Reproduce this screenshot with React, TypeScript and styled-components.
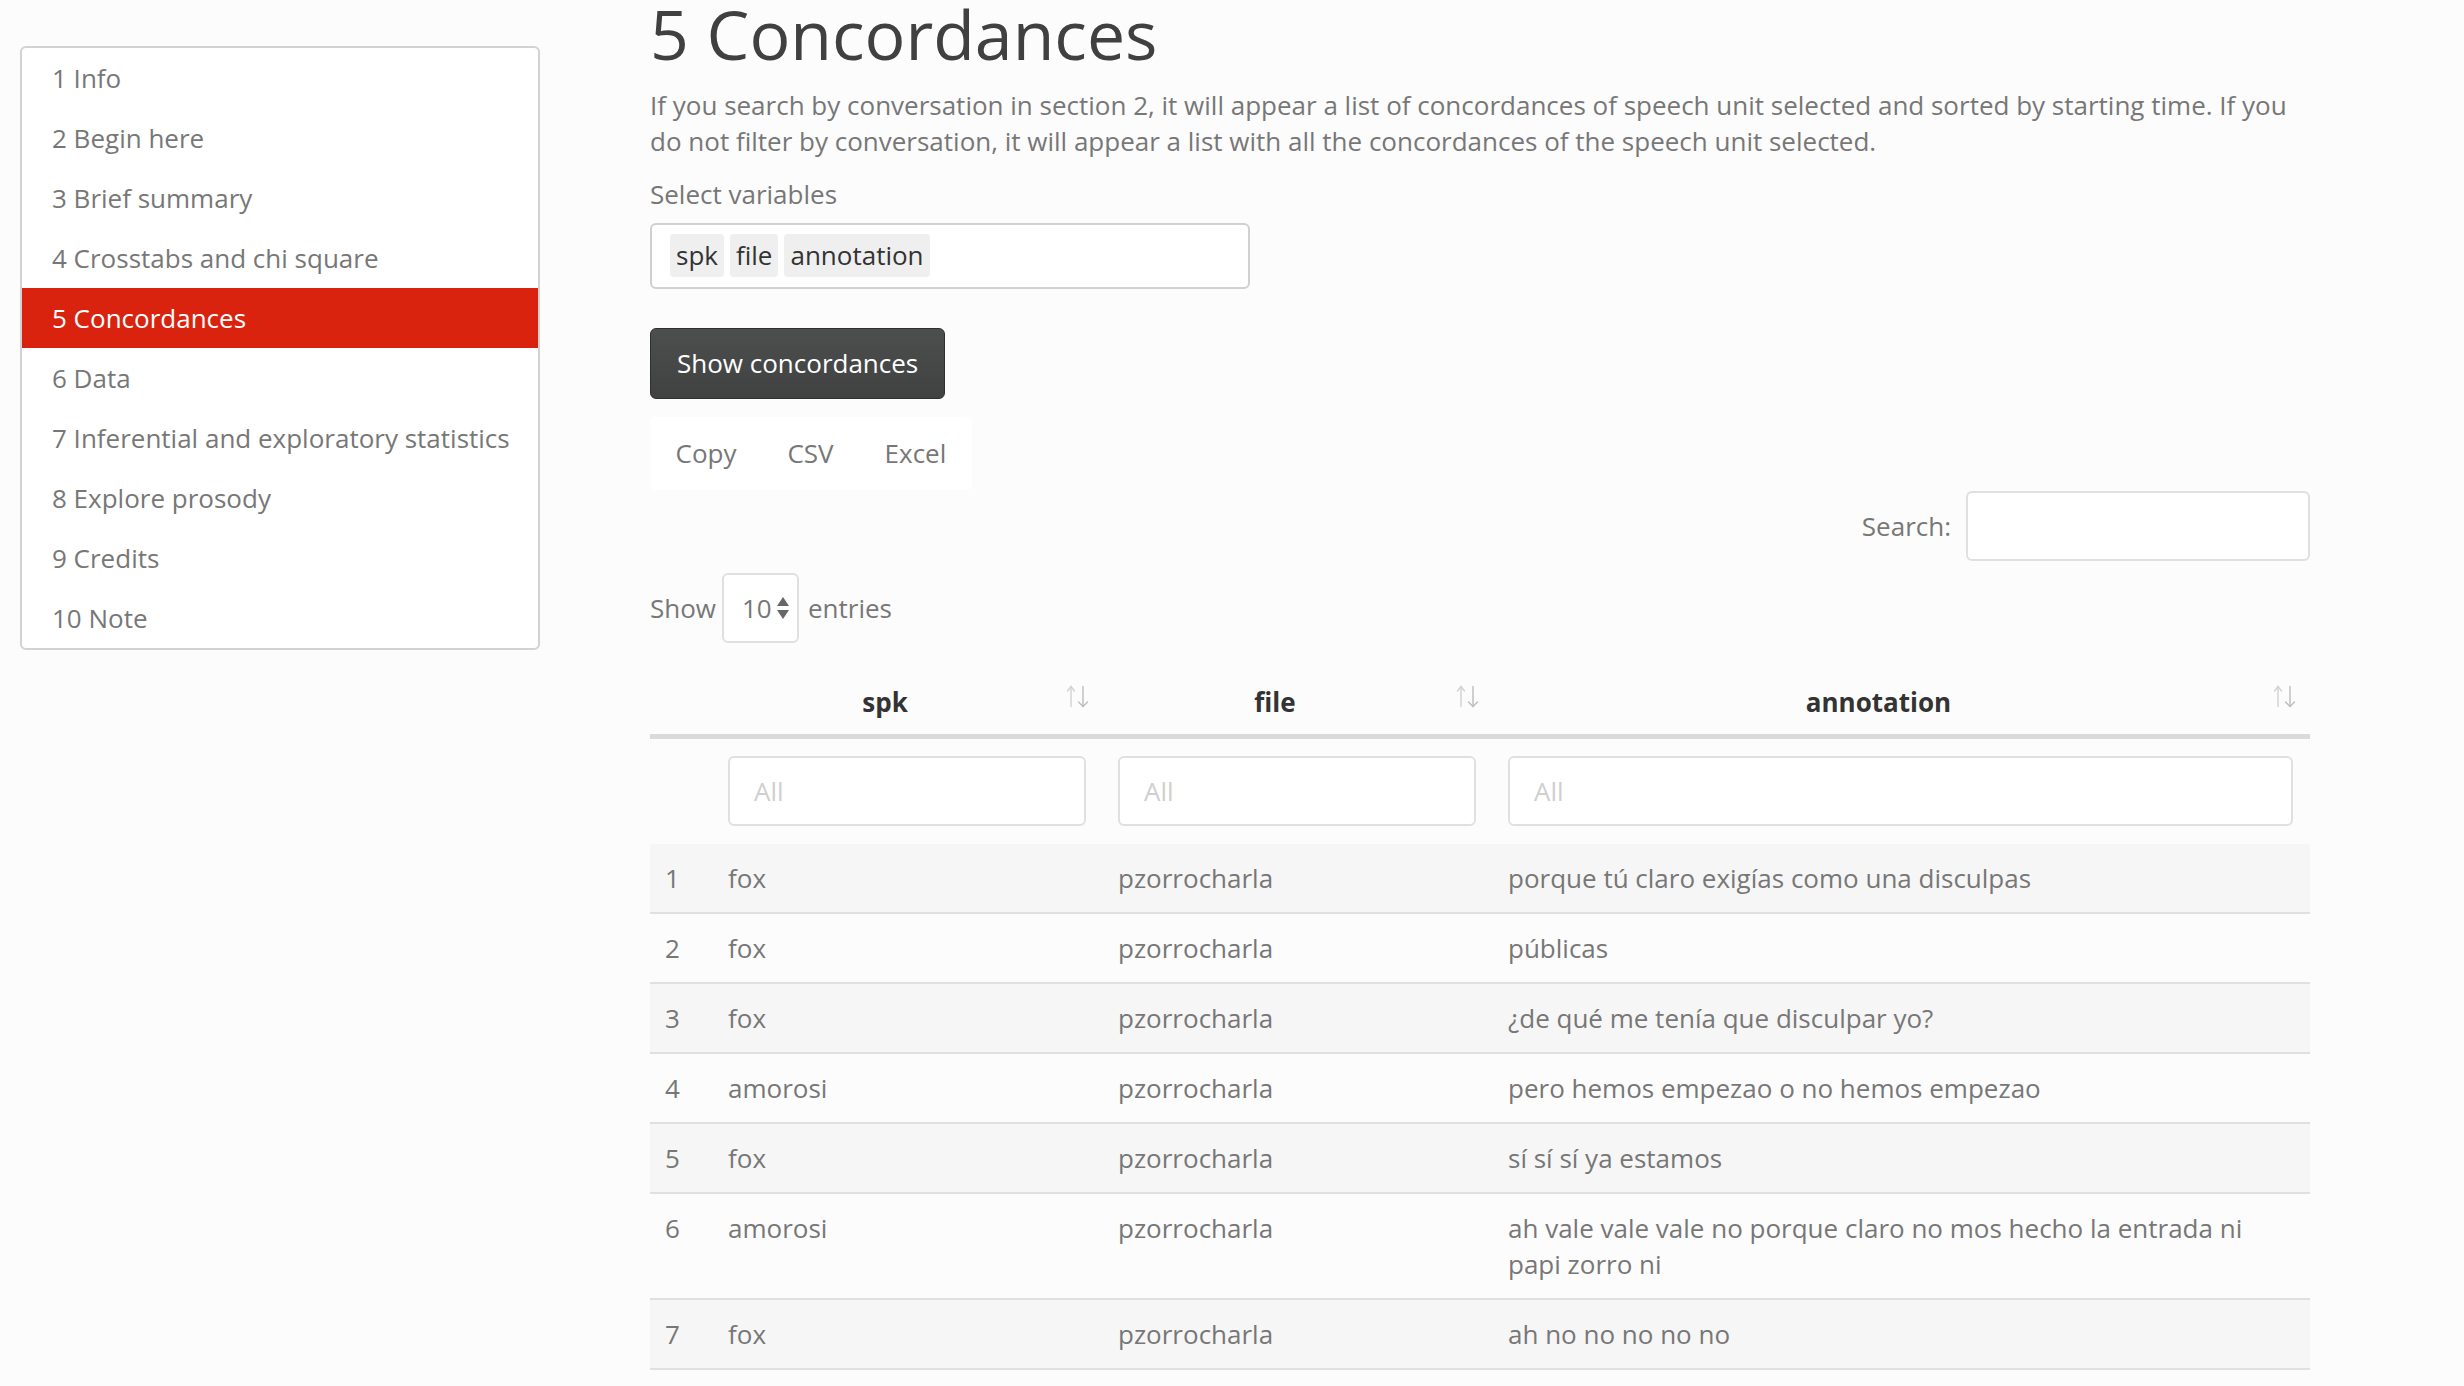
import React from "react";
import styled, { createGlobalStyle } from "styled-components";

const Global = createGlobalStyle`
  html, body { margin: 0; padding: 0; background: #fcfcfc; }
  body {
    font-family: "Open Sans", "Noto Sans", sans-serif;
    font-size: 26px;
    line-height: 36px;
    color: #777;
  }
  * { box-sizing: border-box; }
`;

const Page = styled.div`
  display: grid;
  grid-template-columns: 520px 1660px;
  column-gap: 110px;
  padding-left: 20px;
  align-items: start;
`;

const Sidebar = styled.nav`
  margin-top: 46px;
  border: 2px solid #d2d2d2;
  border-radius: 6px;
  background: #fff;
  overflow: hidden;
  display: flex;
  flex-direction: column;
`;

const NavItem = styled.a<{ $active?: boolean }>`
  display: flex;
  align-items: center;
  height: 60px;
  padding: 0 30px;
  color: ${(p) => (p.$active ? "#fff" : "#777")};
  background: ${(p) => (p.$active ? "#d9230f" : "transparent")};
  text-decoration: none;
  white-space: nowrap;
`;

const Main = styled.main`
  display: flex;
  flex-direction: column;
  align-items: stretch;
  margin-top: -7px;
`;

const Title = styled.h1`
  font-size: 68px;
  line-height: 1.2;
  font-weight: 400;
  color: #404040;
  margin: 0 0 12px;
`;

const Para = styled.p`
  margin: 0 0 17px;
`;

const Label = styled.label`
  display: block;
  margin-bottom: 11px;
`;

const SelectBox = styled.div`
  width: 600px;
  height: 66px;
  border: 2px solid #d0d0d0;
  border-radius: 6px;
  background: #fff;
  display: flex;
  align-items: center;
  gap: 6px;
  padding-left: 18px;
`;

const Chip = styled.span`
  display: inline-block;
  height: 43px;
  line-height: 43px;
  padding: 0 6px;
  background: #efefef;
  border-radius: 4px;
  color: #333;
`;

const DarkButton = styled.button`
  align-self: flex-start;
  margin-top: 39px;
  height: 71px;
  padding: 0 26px;
  font: inherit;
  color: #fff;
  background: linear-gradient(#4d4f4f, #404242);
  border: 1.5px solid #2e3030;
  border-radius: 6px;
`;

const ExportGroup = styled.div`
  align-self: flex-start;
  margin-top: 18px;
  display: inline-flex;
  height: 73px;
  background: #fff;
  border-radius: 6px;
`;

const ExportButton = styled.button`
  font: inherit;
  color: #777;
  background: transparent;
  border: none;
  padding: 0 25.5px;
`;

const SearchRow = styled.div`
  margin-top: 1px;
  display: flex;
  justify-content: flex-end;
  align-items: center;
  gap: 15px;
`;

const TextInput = styled.input<{ $w?: string }>`
  width: ${(p) => p.$w || "100%"};
  height: 70px;
  border: 2px solid #e0e0e0;
  border-radius: 6px;
  background: #fff;
  font: inherit;
  color: #555;
  padding: 0 24px;
  &::placeholder { color: #cfcfcf; }
`;

const LengthRow = styled.div`
  margin-top: 12px;
  display: flex;
  align-items: center;
`;

const LengthSelect = styled.div`
  width: 77px;
  height: 70px;
  margin: 0 9px 0 6px;
  border: 2px solid #e0e0e0;
  border-radius: 6px;
  background: #fff;
  display: flex;
  align-items: center;
  padding-left: 18px;
  gap: 5px;
`;

const Table = styled.table`
  margin-top: 21px;
  width: 1660px;
  table-layout: fixed;
  border-collapse: separate;
  border-spacing: 0;
`;

const Th = styled.th`
  position: relative;
  font-weight: 700;
  color: #333;
  text-align: center;
  padding: 20px 61px 14px 15px;
  border-bottom: 5px solid #dadada;
`;

const SortIcon = styled.svg`
  position: absolute;
  right: 13px;
  top: 21px;
`;

const FilterTd = styled.td`
  padding: 17px 17px 18px 15px;
`;

const Tr = styled.tr<{ $striped?: boolean }>`
  background: ${(p) => (p.$striped ? "#f6f6f6" : "transparent")};
`;

const Td = styled.td`
  padding: 16px 15px;
  vertical-align: top;
  border-bottom: 2px solid #e0e0e0;
  color: #777;
`;

const nav = [
  "1 Info",
  "2 Begin here",
  "3 Brief summary",
  "4 Crosstabs and chi square",
  "5 Concordances",
  "6 Data",
  "7 Inferential and exploratory statistics",
  "8 Explore prosody",
  "9 Credits",
  "10 Note",
];

const rows: [string, string, string][] = [
  ["fox", "pzorrocharla", "porque tú claro exigías como una disculpas"],
  ["fox", "pzorrocharla", "públicas"],
  ["fox", "pzorrocharla", "¿de qué me tenía que disculpar yo?"],
  ["amorosi", "pzorrocharla", "pero hemos empezao o no hemos empezao"],
  ["fox", "pzorrocharla", "sí sí sí ya estamos"],
  ["amorosi", "pzorrocharla", "ah vale vale vale no porque claro no mos hecho la entrada ni papi zorro ni"],
  ["fox", "pzorrocharla", "ah no no no no no"],
];

const Sort = () => (
  <SortIcon width="24" height="23" viewBox="0 0 24 23" fill="none" strokeWidth="1.4" strokeLinecap="round">
    <g stroke="#d2d2d2">
      <line x1="5" y1="1.5" x2="5" y2="21.5" />
      <polyline points="1.5,6 5,1.5 8.5,6" />
    </g>
    <g stroke="#bdbdbd">
      <line x1="17" y1="1.5" x2="17" y2="21.5" />
      <polyline points="12.5,17 17,21.5 21.5,17" />
    </g>
  </SortIcon>
);

export default function App() {
  return (
    <>
      <Global />
      <Page>
        <Sidebar>
          {nav.map((n) => (
            <NavItem key={n} $active={n === "5 Concordances"}>
              {n}
            </NavItem>
          ))}
        </Sidebar>
        <Main>
          <Title>5 Concordances</Title>
          <Para>
            If you search by conversation in section 2, it will appear a list of concordances of speech unit selected and
            sorted by starting time. If you do not filter by conversation, it will appear a list with all the
            concordances of the speech unit selected.
          </Para>
          <Label>Select variables</Label>
          <SelectBox>
            <Chip>spk</Chip>
            <Chip>file</Chip>
            <Chip>annotation</Chip>
          </SelectBox>
          <DarkButton>Show concordances</DarkButton>
          <ExportGroup>
            <ExportButton>Copy</ExportButton>
            <ExportButton>CSV</ExportButton>
            <ExportButton>Excel</ExportButton>
          </ExportGroup>
          <SearchRow>
            <span>Search:</span>
            <TextInput $w="344px" />
          </SearchRow>
          <LengthRow>
            <span>Show</span>
            <LengthSelect>
              <span>10</span>
              <svg width="12" height="22" viewBox="0 0 12 22">
                <polygon points="6,0 12,9 0,9" fill="#666" />
                <polygon points="0,13 12,13 6,22" fill="#666" />
              </svg>
            </LengthSelect>
            <span>entries</span>
          </LengthRow>
          <Table>
            <colgroup>
              <col style={{ width: 63 }} />
              <col style={{ width: 390 }} />
              <col style={{ width: 390 }} />
              <col style={{ width: 817 }} />
            </colgroup>
            <thead>
              <tr>
                <Th />
                <Th>
                  spk
                  <Sort />
                </Th>
                <Th>
                  file
                  <Sort />
                </Th>
                <Th>
                  annotation
                  <Sort />
                </Th>
              </tr>
              <tr>
                <FilterTd />
                <FilterTd>
                  <TextInput placeholder="All" />
                </FilterTd>
                <FilterTd>
                  <TextInput placeholder="All" />
                </FilterTd>
                <FilterTd>
                  <TextInput placeholder="All" />
                </FilterTd>
              </tr>
            </thead>
            <tbody>
              {rows.map((r, i) => (
                <Tr key={i} $striped={i % 2 === 0}>
                  <Td>{i + 1}</Td>
                  <Td>{r[0]}</Td>
                  <Td>{r[1]}</Td>
                  <Td>{r[2]}</Td>
                </Tr>
              ))}
            </tbody>
          </Table>
        </Main>
      </Page>
    </>
  );
}
